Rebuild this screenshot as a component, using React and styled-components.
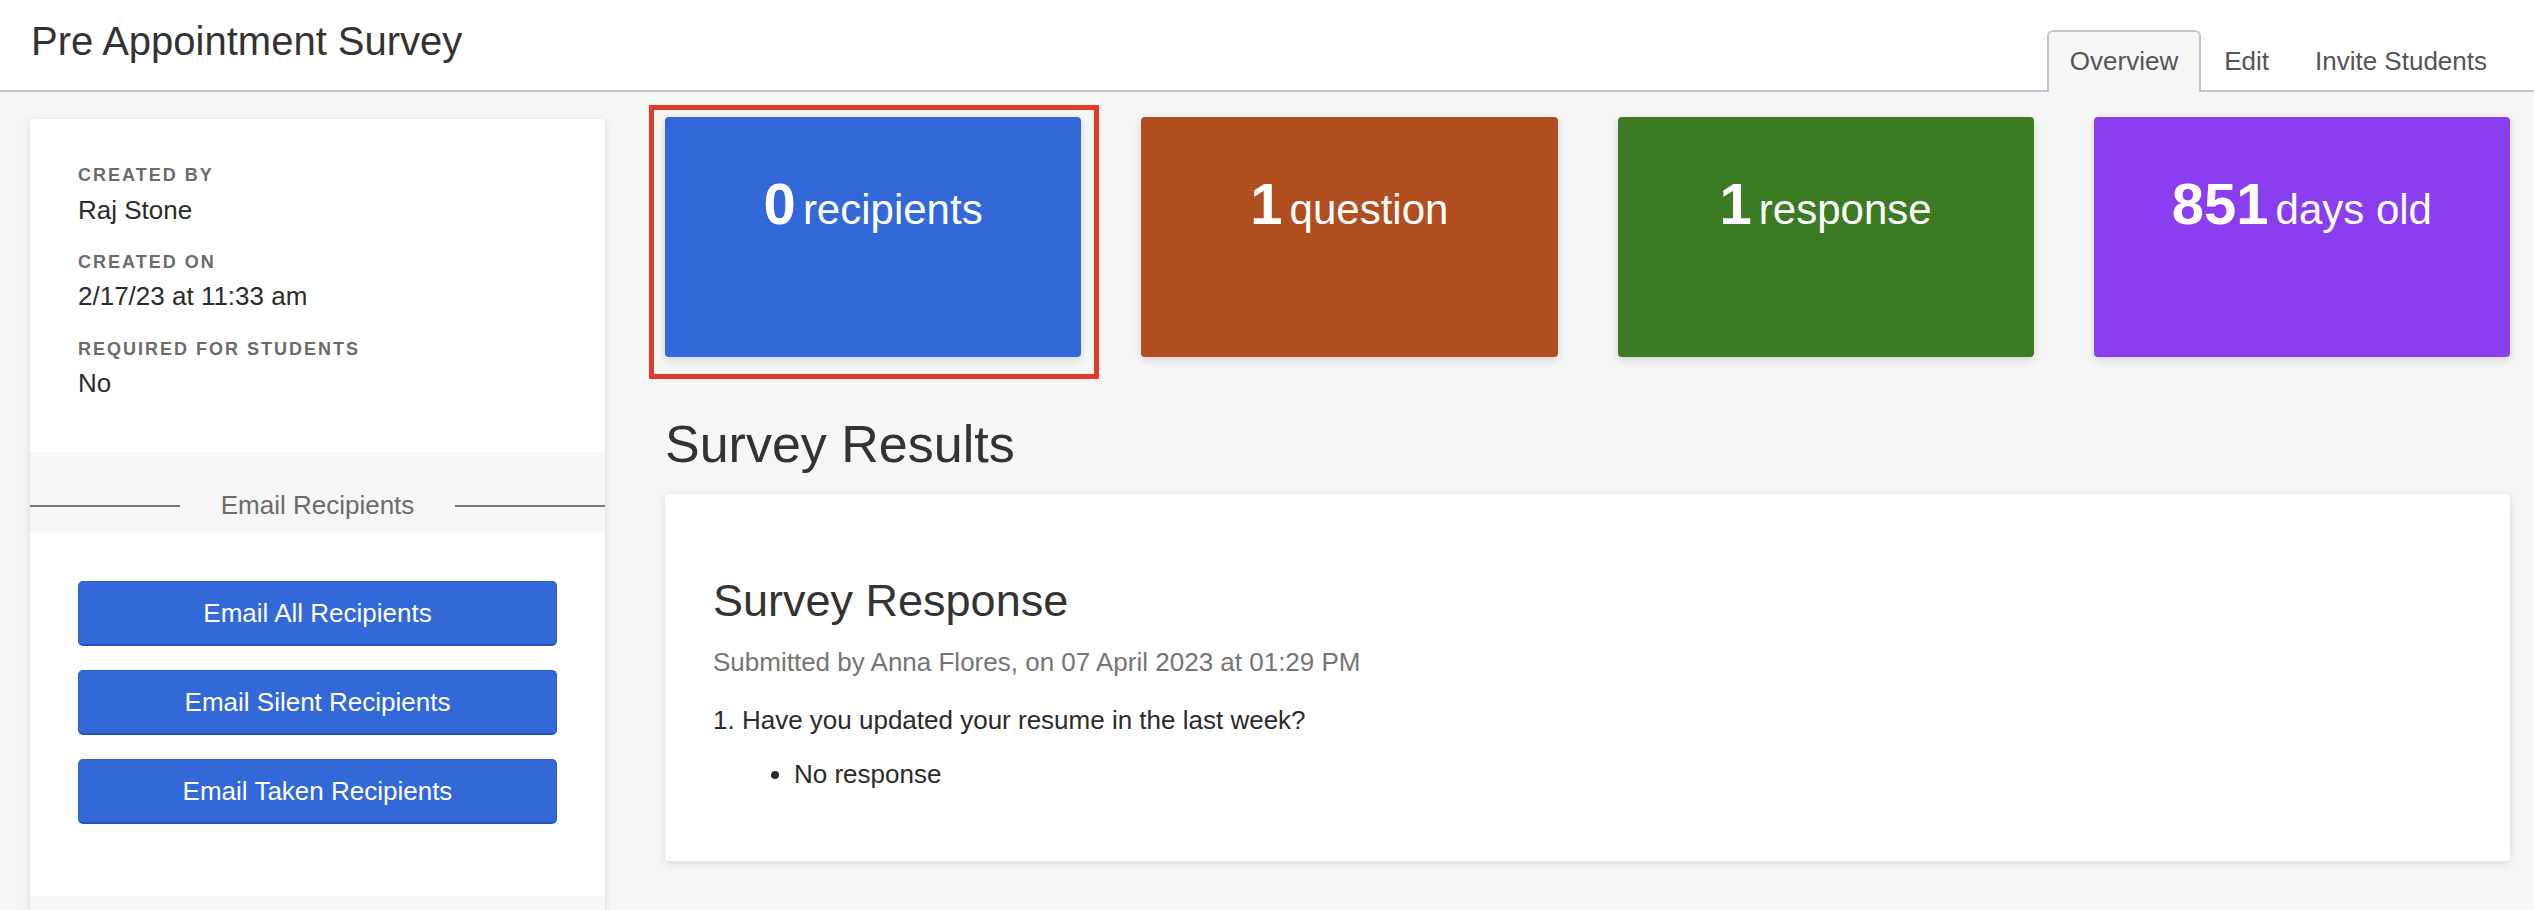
import React from "react";
import styled, { createGlobalStyle } from "styled-components";

const GlobalStyle = createGlobalStyle`
  * { box-sizing: border-box; }
  body {
    margin: 0;
    background: #f6f6f6;
    font-family: "Liberation Sans", Arial, sans-serif;
    color: #2b2b2b;
    overflow: hidden;
  }
`;

const Header = styled.header`
  height: 92px;
  background: #ffffff;
  border-bottom: 2px solid #bfc8d2;
  display: flex;
  justify-content: space-between;
  align-items: flex-end;
  padding: 0 24px 0 31px;
`;

const Title = styled.h1`
  align-self: flex-start;
  margin: 17px 0 0;
  font-size: 40px;
  font-weight: 400;
  line-height: 1.2;
  color: #333333;
`;

const Tabs = styled.nav`
  display: flex;
  margin-bottom: -2px;
`;

const Tab = styled.div`
  padding: 14px 21px 15px;
  font-size: 26px;
  line-height: 1.2;
  color: #555555;
  border: 2px solid ${(p) => (p.active ? "#bfc8d2" : "transparent")};
  border-bottom: none;
  border-radius: 6px 6px 0 0;
  background: ${(p) => (p.active ? "#f6f6f6" : "transparent")};
`;

const Body = styled.div`
  display: flex;
  gap: 60px;
  padding: 25px 24px 0 30px;
  align-items: flex-start;
`;

const Sidebar = styled.aside`
  width: 575px;
  flex: none;
  margin-top: 2px;
  background: #ffffff;
  border-radius: 4px;
  box-shadow: 0 2px 8px rgba(0, 0, 0, 0.12);
`;

const InfoSection = styled.div`
  padding: 46px 48px 53px;
`;

const Label = styled.div`
  font-size: 18px;
  font-weight: 700;
  line-height: 1.2;
  letter-spacing: 2px;
  text-transform: uppercase;
  color: #6b6b6b;
  margin-bottom: 8px;
`;

const Value = styled.div`
  font-size: 26px;
  line-height: 1.2;
  color: #2b2b2b;
  margin-bottom: 26px;
  &:last-child {
    margin-bottom: 0;
  }
`;

const DividerBand = styled.div`
  height: 81px;
  background: #f6f6f6;
  display: flex;
  align-items: center;
  padding: 38px 0 12px;
`;

const DividerLine = styled.div`
  flex: 1;
  height: 2px;
  background: #777777;
`;

const DividerText = styled.div`
  margin: 0 41px;
  font-size: 26px;
  line-height: 1.2;
  color: #6b6b6b;
`;

const ButtonSection = styled.div`
  display: flex;
  flex-direction: column;
  gap: 24px;
  padding: 48px 48px 72px;
`;

const EmailButton = styled.button`
  height: 65px;
  border: 1px solid #2c5ec9;
  border-bottom: 2px solid #2753b8;
  border-radius: 5px;
  background: #3268d8;
  color: #ffffff;
  font-family: inherit;
  font-size: 26px;
`;

const Main = styled.main`
  flex: 1;
  min-width: 0;
`;

const StatGrid = styled.div`
  display: grid;
  grid-template-columns: repeat(4, 1fr);
  gap: 60px;
`;

const StatCard = styled.div`
  position: relative;
  height: 240px;
  background: ${(p) => p.color};
  border-radius: 4px;
  box-shadow: 0 3px 8px rgba(0, 0, 0, 0.14);
  display: flex;
  justify-content: center;
  align-items: baseline;
  padding-top: 52px;
  color: #ffffff;
  ${(p) =>
    p.highlighted &&
    `
    &::after {
      content: "";
      position: absolute;
      top: -12px;
      left: -16px;
      right: -18px;
      bottom: -22px;
      border: 5px solid #e5392b;
    }
  `}
`;

const StatNumber = styled.span`
  font-size: 58px;
  font-weight: 700;
  line-height: 1.2;
`;

const StatLabel = styled.span`
  font-size: 42px;
  line-height: 1.2;
  margin-left: 7px;
`;

const SectionHeading = styled.h2`
  margin: 56px 0 19px;
  font-size: 52px;
  font-weight: 400;
  line-height: 1.2;
  color: #333333;
`;

const ResponseCard = styled.section`
  background: #ffffff;
  border-radius: 4px;
  box-shadow: 0 2px 8px rgba(0, 0, 0, 0.12);
  padding: 80px 48px 71px;
`;

const ResponseTitle = styled.h3`
  margin: 0 0 19px;
  font-size: 45px;
  font-weight: 400;
  line-height: 1.2;
  color: #333333;
`;

const Submitted = styled.div`
  font-size: 26px;
  line-height: 1.2;
  color: #757575;
  margin-bottom: 26px;
`;

const Question = styled.div`
  font-size: 26px;
  line-height: 1.2;
  color: #2b2b2b;
`;

const AnswerList = styled.ul`
  margin: 23px 0 0;
  padding-left: 81px;
  font-size: 26px;
  line-height: 1.2;
  color: #2b2b2b;
`;

const stats = [
  { value: "0", label: "recipients", color: "#3268d8", highlighted: true },
  { value: "1", label: "question", color: "#b14e20" },
  { value: "1", label: "response", color: "#3a7b23" },
  { value: "851", label: "days old", color: "#8a3eef" },
];

const details = [
  { label: "Created By", value: "Raj Stone" },
  { label: "Created On", value: "2/17/23 at 11:33 am" },
  { label: "Required For Students", value: "No" },
];

export default function App() {
  return (
    <>
      <GlobalStyle />
      <Header>
        <Title>Pre Appointment Survey</Title>
        <Tabs>
          <Tab active>Overview</Tab>
          <Tab>Edit</Tab>
          <Tab>Invite Students</Tab>
        </Tabs>
      </Header>

      <Body>
        <Sidebar>
          <InfoSection>
            {details.map((d) => (
              <React.Fragment key={d.label}>
                <Label>{d.label}</Label>
                <Value>{d.value}</Value>
              </React.Fragment>
            ))}
          </InfoSection>
          <DividerBand>
            <DividerLine />
            <DividerText>Email Recipients</DividerText>
            <DividerLine />
          </DividerBand>
          <ButtonSection>
            <EmailButton>Email All Recipients</EmailButton>
            <EmailButton>Email Silent Recipients</EmailButton>
            <EmailButton>Email Taken Recipients</EmailButton>
          </ButtonSection>
          <DividerBand />
        </Sidebar>

        <Main>
          <StatGrid>
            {stats.map((s) => (
              <StatCard key={s.label} color={s.color} highlighted={s.highlighted}>
                <StatNumber>{s.value}</StatNumber>
                <StatLabel>{s.label}</StatLabel>
              </StatCard>
            ))}
          </StatGrid>

          <SectionHeading>Survey Results</SectionHeading>
          <ResponseCard>
            <ResponseTitle>Survey Response</ResponseTitle>
            <Submitted>
              Submitted by Anna Flores, on 07 April 2023 at 01:29 PM
            </Submitted>
            <Question>1. Have you updated your resume in the last week?</Question>
            <AnswerList>
              <li>No response</li>
            </AnswerList>
          </ResponseCard>
        </Main>
      </Body>
    </>
  );
}
